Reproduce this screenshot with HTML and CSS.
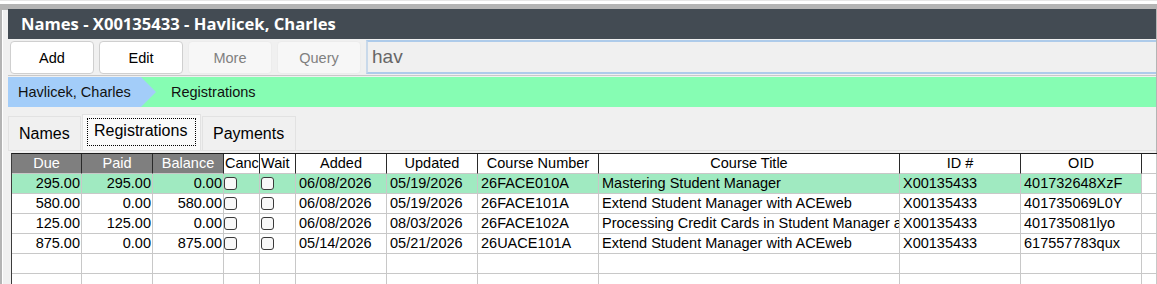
FILE: index.html
```html
<!DOCTYPE html>
<html>
<head>
<meta charset="utf-8">
<link rel="stylesheet" href="styles.css">
</head>
<body>
<div class="window">
  <div class="titlebar">Names - X00135433 - Havlicek, Charles</div>
  <div class="toolbar">
    <button class="btn">Add</button>
    <button class="btn">Edit</button>
    <button class="btn disabled">More</button>
    <button class="btn disabled">Query</button>
    <div class="search">hav</div>
  </div>
  <div class="crumbs">
    <div class="crumb first">Havlicek, Charles</div>
    <div class="crumb second">Registrations</div>
  </div>
  <div class="tabs">
    <div class="tab">Names</div>
    <div class="tab active"><span class="focus">Registrations</span></div>
    <div class="tab">Payments</div>
  </div>
  <div class="panel">
    <table class="grid">
      <colgroup>
        <col class="c70"><col class="c71"><col class="c71"><col class="c36"><col class="c36"><col class="c91"><col class="c91"><col class="c121"><col class="c301"><col class="c121"><col class="c121"><col class="c15">
      </colgroup>
      <thead>
        <tr>
          <th class="gh">Due</th><th class="gh">Paid</th><th class="gh">Balance</th><th class="left">Canc</th><th class="left">Wait</th><th>Added</th><th>Updated</th><th>Course Number</th><th>Course Title</th><th>ID #</th><th>OID</th><th class="fill"></th>
        </tr>
      </thead>
      <tbody>
        <tr class="sel">
          <td class="num">295.00</td><td class="num">295.00</td><td class="num">0.00</td><td class="cb"><span class="box"></span></td><td class="cb w"><span class="box"></span></td><td>06/08/2026</td><td>05/19/2026</td><td>26FACE010A</td><td>Mastering Student Manager</td><td>X00135433</td><td>401732648XzF</td><td class="fill"></td>
        </tr>
        <tr>
          <td class="num">580.00</td><td class="num">0.00</td><td class="num">580.00</td><td class="cb"><span class="box"></span></td><td class="cb w"><span class="box"></span></td><td>06/08/2026</td><td>05/19/2026</td><td>26FACE101A</td><td>Extend Student Manager with ACEweb</td><td>X00135433</td><td>401735069L0Y</td><td class="fill"></td>
        </tr>
        <tr>
          <td class="num">125.00</td><td class="num">125.00</td><td class="num">0.00</td><td class="cb"><span class="box"></span></td><td class="cb w"><span class="box"></span></td><td>06/08/2026</td><td>08/03/2026</td><td>26FACE102A</td><td>Processing Credit Cards in Student Manager and ACEweb</td><td>X00135433</td><td>401735081lyo</td><td class="fill"></td>
        </tr>
        <tr>
          <td class="num">875.00</td><td class="num">0.00</td><td class="num">875.00</td><td class="cb"><span class="box"></span></td><td class="cb w"><span class="box"></span></td><td>05/14/2026</td><td>05/21/2026</td><td>26UACE101A</td><td>Extend Student Manager with ACEweb</td><td>X00135433</td><td>617557783qux</td><td class="fill"></td>
        </tr>
        <tr class="empty">
          <td></td><td></td><td></td><td></td><td></td><td></td><td></td><td></td><td></td><td></td><td></td><td class="fill"></td>
        </tr>
        <tr class="empty">
          <td></td><td></td><td></td><td></td><td></td><td></td><td></td><td></td><td></td><td></td><td></td><td class="fill"></td>
        </tr>
      </tbody>
    </table>
  </div>
</div>
</body>
</html>
```

FILE: styles.css
```css
html, body {
  margin: 0;
  padding: 0;
  background: #ffffff;
  height: 284px;
  overflow: hidden;
}
body {
  padding-top: 3px;
  border-top: 1px solid #e6e6e6;
  box-sizing: border-box;
  font-family: "Liberation Sans", Arial, sans-serif;
}
.window {
  border-top: 6px solid #b4b4b4;
  border-left: 2px solid #b4b4b4;
  border-right: 1px solid #b4b4b4;
  box-shadow: inset 1px 0 0 #ffffff;
  background: #f0f0f0;
  height: 280px;
  padding-left: 6px;
  padding-right: 0;
  box-sizing: border-box;
}
.titlebar {
  height: 30px;
  background: #434b53;
  color: #ffffff;
  font-family: "Open Sans", "Noto Sans", sans-serif;
  font-weight: 700;
  font-size: 16.6px;
  line-height: 30px;
  padding-left: 13px;
  margin-top: -1px;
}
.toolbar {
  display: flex;
  align-items: stretch;
  gap: 5px;
  height: 33px;
  padding: 2px 0 1px 2px;
  border-bottom: 1px solid #c8c8c8;
}
.btn {
  width: 84px;
  height: 33px;
  margin: 0;
  box-sizing: border-box;
  background: #ffffff;
  border: 1px solid #cfcfcf;
  border-radius: 4px;
  font-family: "Liberation Sans", Arial, sans-serif;
  font-size: 14.5px;
  color: #000000;
  padding: 0;
}
.btn.disabled {
  background: #f7f7f7;
  border-color: #ececec;
  color: #808080;
}
.search {
  flex: 1;
  box-sizing: border-box;
  height: 34px;
  margin-top: -1px;
  border-top: 2px solid #aecbea;
  border-bottom: 2px solid #aecbea;
  border-left: 2px solid #c9d9ea;
  background: #f0f0f0;
  color: #666666;
  font-size: 19px;
  line-height: 29px;
  padding-left: 4px;
}
.crumbs {
  display: flex;
  height: 30px;
  margin-top: 1px;
  background: #86fdb3;
  font-size: 14.5px;
  line-height: 30px;
}
.crumb.first {
  position: relative;
  background: #a3cdf9;
  width: 133px;
  padding-left: 10px;
  box-sizing: border-box;
  color: #111111;
}
.crumb.first::after {
  content: "";
  position: absolute;
  right: -15px;
  top: 0;
  border-top: 15px solid transparent;
  border-bottom: 15px solid transparent;
  border-left: 15px solid #a3cdf9;
}
.crumb.second {
  padding-left: 30px;
  color: #111111;
}
.tabs {
  display: flex;
  align-items: flex-end;
  height: 43px;
  border-bottom: 1px solid #e2e2e2;
  font-size: 16px;
}
.tab {
  height: 34px;
  box-sizing: border-box;
  border: 1px solid #e2e2e2;
  border-bottom: none;
  background: #f0f0f0;
  color: #000000;
  line-height: 34px;
  padding: 0 10px;
  margin-right: 1px;
}
.tab:first-child { width: 73px; padding-left: 10px; }
.tab.active {
  height: 36px;
  background: #f9f9f9;
  padding: 3px 4px 0 4px;
  width: 119px;
  line-height: 1;
}
.tab:last-child { width: 94px; }
.focus {
  display: block;
  border: 1px dotted #000000;
  height: 28px;
  line-height: 24px;
  padding-left: 6px;
  box-sizing: border-box;
}
.panel {
  padding: 2px 0 0 3px;
}
.grid {
  table-layout: fixed;
  border-collapse: separate;
  border-spacing: 0;
  width: 1146px;
  border-left: 1px solid #3c3c3c;
  border-top: 1px solid #1e1e1e;
  font-size: 14.5px;
  background: #ffffff;
}
.c70 { width: 70px; }
.c71 { width: 71px; }
.c36 { width: 36px; }
.c91 { width: 91px; }
.c121 { width: 121px; }
.c301 { width: 301px; }
.c15 { width: 15px; }
.grid th {
  height: 19px;
  padding: 0;
  font-weight: 400;
  text-align: center;
  background: #ffffff;
  color: #000000;
  border-right: 1px solid #2a2a2a;
  border-bottom: 1px solid #c8c8c8;
  white-space: nowrap;
  overflow: hidden;
  line-height: 19px;
}
.grid th.gh {
  background: #7f7f7f;
  color: #ffffff;
}
.grid th.left {
  text-align: left;
  padding-left: 1px;
}
.grid th.fill {
  border-right: 1px solid #c8c8c8;
}
.grid td {
  height: 19px;
  padding: 0 3px;
  border-right: 1px solid #c8c8c8;
  border-bottom: 1px solid #c8c8c8;
  white-space: nowrap;
  overflow: hidden;
  line-height: 19px;
  color: #000000;
}
.grid td.num {
  text-align: right;
  padding: 0 1px 0 0;
}
.grid tr.sel td {
  background: #a0eac1;
}
.grid tr.sel td.fill {
  background: #ffffff;
}
.grid td.cb {
  padding: 0;
  vertical-align: middle;
}
.grid td.cb.w {
  padding-left: 1px;
}
.box {
  display: block;
  width: 11px;
  height: 11px;
  border: 1px solid #3a3a3a;
  border-radius: 3px;
  background: #f8f8f8;
}
```
